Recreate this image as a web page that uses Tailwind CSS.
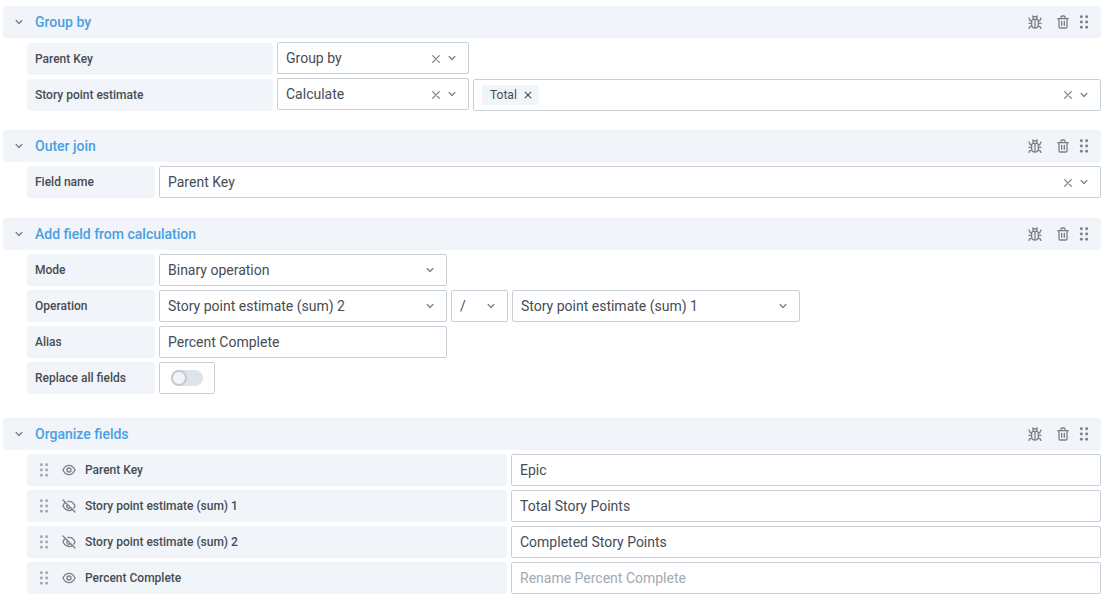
<!DOCTYPE html>
<html lang="en">
<head>
<meta charset="utf-8">
<title>Transformations</title>
<script src="https://cdn.jsdelivr.net/npm/@tailwindcss/browser@4"></script>
</head>
<body class="bg-white font-['Roboto',sans-serif] text-sm text-[#464c54]">
<svg class="hidden" aria-hidden="true">
  <symbol id="angle" viewBox="0 0 24 24"><path fill="currentColor" d="M17 9.17a1 1 0 0 0-1.41 0L12 12.71 8.46 9.17a1 1 0 0 0-1.41 0 1 1 0 0 0 0 1.42l4.24 4.24a1 1 0 0 0 1.42 0L17 10.59a1 1 0 0 0 0-1.42Z"/></symbol>
  <symbol id="times" viewBox="0 0 24 24"><path fill="none" stroke="currentColor" stroke-width="1.9" stroke-linecap="round" d="m7 7 10 10m0-10L7 17"/></symbol>
  <symbol id="trash" viewBox="0 0 24 24"><path fill="currentColor" d="M10,18a1,1,0,0,0,1-1V11a1,1,0,0,0-2,0v6A1,1,0,0,0,10,18ZM20,6H16V5a3,3,0,0,0-3-3H11A3,3,0,0,0,8,5V6H4A1,1,0,0,0,4,8H5V19a3,3,0,0,0,3,3h8a3,3,0,0,0,3-3V8h1a1,1,0,0,0,0-2ZM10,5a1,1,0,0,1,1-1h2a1,1,0,0,1,1,1V6H10Zm7,14a1,1,0,0,1-1,1H8a1,1,0,0,1-1-1V8H17Zm-3-1a1,1,0,0,0,1-1V11a1,1,0,0,0-2,0v6A1,1,0,0,0,14,18Z"/></symbol>
  <symbol id="bug" viewBox="0 0 24 24"><path fill="none" stroke="currentColor" stroke-width="2" stroke-linecap="round" stroke-linejoin="round" d="M7 11a3 3 0 0 1 3-3h4a3 3 0 0 1 3 3v5a5 5 0 0 1-10 0ZM9 8V7a3 3 0 0 1 6 0v1M12 8v13M9.700 4.500 8.500 3m5.800 1.500L15.500 3M7 11 4.500 9.500 3 6M7 14H3m4.500 4L4.500 19 3 21.500M17 11l2.500-1.500L21 6M17 14h4m-4.500 4 3 1 1.500 2.500"/></symbol>
  <symbol id="dots" viewBox="0 0 24 24"><g fill="currentColor"><circle cx="8" cy="4" r="2.2"/><circle cx="16" cy="4" r="2.2"/><circle cx="8" cy="12" r="2.2"/><circle cx="16" cy="12" r="2.2"/><circle cx="8" cy="20" r="2.2"/><circle cx="16" cy="20" r="2.2"/></g></symbol>
  <symbol id="eye" viewBox="0 0 24 24"><path fill="currentColor" d="M21.92,11.6C19.9,6.91,16.1,4,12,4S4.1,6.91,2.08,11.6a1,1,0,0,0,0,.8C4.1,17.09,7.9,20,12,20s7.9-2.91,9.92-7.6A1,1,0,0,0,21.92,11.6ZM12,18c-3.17,0-6.17-2.29-7.9-6C5.83,8.29,8.83,6,12,6s6.17,2.29,7.9,6C18.17,15.71,15.17,18,12,18ZM12,8a4,4,0,1,0,4,4A4,4,0,0,0,12,8Zm0,6a2,2,0,1,1,2-2A2,2,0,0,1,12,14Z"/></symbol>
  <symbol id="eye-off" viewBox="0 0 24 24"><path fill="none" stroke="currentColor" stroke-width="2" stroke-linecap="round" stroke-linejoin="round" d="m3 3 18 18M10.500 5.200C15 4.500 19 7.500 21 12a14 14 0 0 1-2 3.200M6.400 6.500A13 13 0 0 0 3 12c2.500 5.500 8 8.500 13.500 5.700M9.300 10.500a3 3 0 0 0 4.200 4.200"/></symbol>
</svg>

<main class="flex flex-col gap-5 pt-[6px] pr-[5px] pb-3 pl-[3px]">

  <section>
    <header class="flex h-8 items-center rounded-sm bg-[#f1f5f9] pl-2 pr-[9px] text-[#7b8087]">
      <button type="button" aria-label="Collapse Group by" class="mr-2"><svg class="size-4"><use href="#angle"/></svg></button>
      <h2 class="flex-1 font-medium text-[#4a9fe0]">Group by</h2>
      <button type="button" aria-label="Debug" class="mr-3"><svg class="size-4"><use href="#bug"/></svg></button>
      <button type="button" aria-label="Remove" class="mr-[5px]"><svg class="size-4"><use href="#trash"/></svg></button>
      <button type="button" aria-label="Move"><svg class="size-4"><use href="#dots"/></svg></button>
    </header>
    <div class="mt-1 ml-6 flex flex-col gap-1">
      <div class="-mb-px flex gap-1">
        <label for="g1" class="mt-px flex h-8 w-[246px] items-center rounded-sm bg-[#f1f5f9] px-2 text-xs font-medium">Parent Key</label>
        <div class="relative h-8 w-48">
          <select id="g1" class="h-8 w-full appearance-none rounded-xs border border-[#c7d0d9] bg-white px-2"><option>Group by</option></select>
          <button type="button" aria-label="Clear" class="absolute top-[9px] right-[25px] text-[#7b8087]"><svg class="size-4"><use href="#times"/></svg></button>
          <svg class="pointer-events-none absolute top-2 right-[9px] size-4 text-[#7b8087]"><use href="#angle"/></svg>
        </div>
      </div>
      <div class="-mb-px flex gap-1">
        <label for="g2" class="mt-px flex h-8 w-[246px] items-center rounded-sm bg-[#f1f5f9] px-2 text-xs font-medium">Story point estimate</label>
        <div class="relative h-8 w-48">
          <select id="g2" class="h-8 w-full appearance-none rounded-xs border border-[#c7d0d9] bg-white px-2"><option>Calculate</option></select>
          <button type="button" aria-label="Clear" class="absolute top-[9px] right-[25px] text-[#7b8087]"><svg class="size-4"><use href="#times"/></svg></button>
          <svg class="pointer-events-none absolute top-2 right-[9px] size-4 text-[#7b8087]"><use href="#angle"/></svg>
        </div>
        <div class="mt-px flex h-8 flex-1 items-center rounded-xs border border-[#c7d0d9] px-2 text-[#7b8087]">
          <span class="flex h-5 items-center gap-1 rounded-xs bg-[#f1f5f9] pr-1 pl-2 text-xs text-[#464c54]">Total
            <button type="button" aria-label="Remove Total"><svg class="size-[14px]"><use href="#times"/></svg></button>
          </span>
          <input type="text" aria-label="Pick stats" class="h-6 min-w-0 flex-1 outline-none">
          <button type="button" aria-label="Clear"><svg class="size-4"><use href="#times"/></svg></button>
          <button type="button" aria-label="Open"><svg class="size-4"><use href="#angle"/></svg></button>
        </div>
      </div>
    </div>
  </section>

  <section>
    <header class="flex h-8 items-center rounded-sm bg-[#f1f5f9] pl-2 pr-[9px] text-[#7b8087]">
      <button type="button" aria-label="Collapse Outer join" class="mr-2"><svg class="size-4"><use href="#angle"/></svg></button>
      <h2 class="flex-1 font-medium text-[#4a9fe0]">Outer join</h2>
      <button type="button" aria-label="Debug" class="mr-3"><svg class="size-4"><use href="#bug"/></svg></button>
      <button type="button" aria-label="Remove" class="mr-[5px]"><svg class="size-4"><use href="#trash"/></svg></button>
      <button type="button" aria-label="Move"><svg class="size-4"><use href="#dots"/></svg></button>
    </header>
    <div class="mt-1 ml-6 flex gap-1">
      <label for="j1" class="flex h-8 w-32 items-center rounded-sm bg-[#f1f5f9] px-2 text-xs font-medium">Field name</label>
      <div class="relative h-8 flex-1">
        <select id="j1" class="h-8 w-full appearance-none rounded-xs border border-[#c7d0d9] bg-white px-2"><option>Parent Key</option></select>
        <button type="button" aria-label="Clear" class="absolute top-[9px] right-[25px] text-[#7b8087]"><svg class="size-4"><use href="#times"/></svg></button>
        <svg class="pointer-events-none absolute top-2 right-[9px] size-4 text-[#7b8087]"><use href="#angle"/></svg>
      </div>
    </div>
  </section>

  <section>
    <header class="flex h-8 items-center rounded-sm bg-[#f1f5f9] pl-2 pr-[9px] text-[#7b8087]">
      <button type="button" aria-label="Collapse Add field from calculation" class="mr-2"><svg class="size-4"><use href="#angle"/></svg></button>
      <h2 class="flex-1 font-medium text-[#4a9fe0]">Add field from calculation</h2>
      <button type="button" aria-label="Debug" class="mr-3"><svg class="size-4"><use href="#bug"/></svg></button>
      <button type="button" aria-label="Remove" class="mr-[5px]"><svg class="size-4"><use href="#trash"/></svg></button>
      <button type="button" aria-label="Move"><svg class="size-4"><use href="#dots"/></svg></button>
    </header>
    <div class="mt-1 mb-1 ml-6 flex flex-col gap-1">
      <div class="flex gap-1">
        <label for="c1" class="flex h-8 w-32 items-center rounded-sm bg-[#f1f5f9] px-2 text-xs font-medium">Mode</label>
        <div class="relative h-8 w-72">
          <select id="c1" class="h-8 w-full appearance-none rounded-xs border border-[#c7d0d9] bg-white px-2"><option>Binary operation</option></select>
          <svg class="pointer-events-none absolute top-2 right-[9px] size-4 text-[#7b8087]"><use href="#angle"/></svg>
        </div>
      </div>
      <div class="flex gap-1">
        <label for="c2" class="flex h-8 w-32 items-center rounded-sm bg-[#f1f5f9] px-2 text-xs font-medium">Operation</label>
        <div class="relative h-8 w-72">
          <select id="c2" class="h-8 w-full appearance-none rounded-xs border border-[#c7d0d9] bg-white px-2"><option>Story point estimate (sum) 2</option></select>
          <svg class="pointer-events-none absolute top-2 right-[9px] size-4 text-[#7b8087]"><use href="#angle"/></svg>
        </div>
        <div class="relative h-8 w-[57px]">
          <select aria-label="Operator" class="h-8 w-full appearance-none rounded-xs border border-[#c7d0d9] bg-white px-2"><option>/</option></select>
          <svg class="pointer-events-none absolute top-2 right-[9px] size-4 text-[#7b8087]"><use href="#angle"/></svg>
        </div>
        <div class="relative h-8 w-72">
          <select aria-label="Right operand" class="h-8 w-full appearance-none rounded-xs border border-[#c7d0d9] bg-white px-2"><option>Story point estimate (sum) 1</option></select>
          <svg class="pointer-events-none absolute top-2 right-[9px] size-4 text-[#7b8087]"><use href="#angle"/></svg>
        </div>
      </div>
      <div class="flex gap-1">
        <label for="c3" class="flex h-8 w-32 items-center rounded-sm bg-[#f1f5f9] px-2 text-xs font-medium">Alias</label>
        <input id="c3" type="text" value="Percent Complete" class="h-8 w-72 rounded-xs border border-[#c7d0d9] px-2">
      </div>
      <div class="flex gap-1">
        <label for="c4" class="flex h-8 w-32 items-center rounded-sm bg-[#f1f5f9] px-2 text-xs font-medium">Replace all fields</label>
        <div class="flex h-8 w-14 items-center justify-center rounded-xs border border-[#c7d0d9]">
          <input id="c4" type="checkbox" role="switch" class="h-4 w-8 appearance-none rounded-full bg-[#dde4ea] before:block before:size-4 before:rounded-full before:border-2 before:border-[#c2cad2] before:bg-[#f1f5f9] checked:before:ml-4">
        </div>
      </div>
    </div>
  </section>

  <section>
    <header class="flex h-8 items-center rounded-sm bg-[#f1f5f9] pl-2 pr-[9px] text-[#7b8087]">
      <button type="button" aria-label="Collapse Organize fields" class="mr-2"><svg class="size-4"><use href="#angle"/></svg></button>
      <h2 class="flex-1 font-medium text-[#4a9fe0]">Organize fields</h2>
      <button type="button" aria-label="Debug" class="mr-3"><svg class="size-4"><use href="#bug"/></svg></button>
      <button type="button" aria-label="Remove" class="mr-[5px]"><svg class="size-4"><use href="#trash"/></svg></button>
      <button type="button" aria-label="Move"><svg class="size-4"><use href="#dots"/></svg></button>
    </header>
    <div class="mt-1 ml-6 flex flex-col gap-1">
      <div class="flex gap-1">
        <div class="flex h-8 w-[480px] items-center rounded-sm bg-[#f1f5f9] px-[9px] text-xs font-medium">
          <svg class="mr-[9px] size-4 text-[#a4a9af]"><use href="#dots"/></svg>
          <button type="button" aria-label="Toggle visibility" class="mr-2 text-[#7b8087]"><svg class="size-4"><use href="#eye"/></svg></button>
          <label for="o1">Parent Key</label>
        </div>
        <input id="o1" type="text" value="Epic" placeholder="Rename Parent Key" class="h-8 min-w-0 flex-1 rounded-xs border border-[#c7d0d9] px-2">
      </div>
      <div class="flex gap-1">
        <div class="flex h-8 w-[480px] items-center rounded-sm bg-[#f1f5f9] px-[9px] text-xs font-medium">
          <svg class="mr-[9px] size-4 text-[#a4a9af]"><use href="#dots"/></svg>
          <button type="button" aria-label="Toggle visibility" class="mr-2 text-[#7b8087]"><svg class="size-4"><use href="#eye-off"/></svg></button>
          <label for="o2">Story point estimate (sum) 1</label>
        </div>
        <input id="o2" type="text" value="Total Story Points" class="h-8 min-w-0 flex-1 rounded-xs border border-[#c7d0d9] px-2">
      </div>
      <div class="flex gap-1">
        <div class="flex h-8 w-[480px] items-center rounded-sm bg-[#f1f5f9] px-[9px] text-xs font-medium">
          <svg class="mr-[9px] size-4 text-[#a4a9af]"><use href="#dots"/></svg>
          <button type="button" aria-label="Toggle visibility" class="mr-2 text-[#7b8087]"><svg class="size-4"><use href="#eye-off"/></svg></button>
          <label for="o3">Story point estimate (sum) 2</label>
        </div>
        <input id="o3" type="text" value="Completed Story Points" class="h-8 min-w-0 flex-1 rounded-xs border border-[#c7d0d9] px-2">
      </div>
      <div class="flex gap-1">
        <div class="flex h-8 w-[480px] items-center rounded-sm bg-[#f1f5f9] px-[9px] text-xs font-medium">
          <svg class="mr-[9px] size-4 text-[#a4a9af]"><use href="#dots"/></svg>
          <button type="button" aria-label="Toggle visibility" class="mr-2 text-[#7b8087]"><svg class="size-4"><use href="#eye"/></svg></button>
          <label for="o4">Percent Complete</label>
        </div>
        <input id="o4" type="text" placeholder="Rename Percent Complete" class="h-8 min-w-0 flex-1 rounded-xs border border-[#c7d0d9] px-2 placeholder:text-[#a4aab1]">
      </div>
    </div>
  </section>
</main>
</body>
</html>
